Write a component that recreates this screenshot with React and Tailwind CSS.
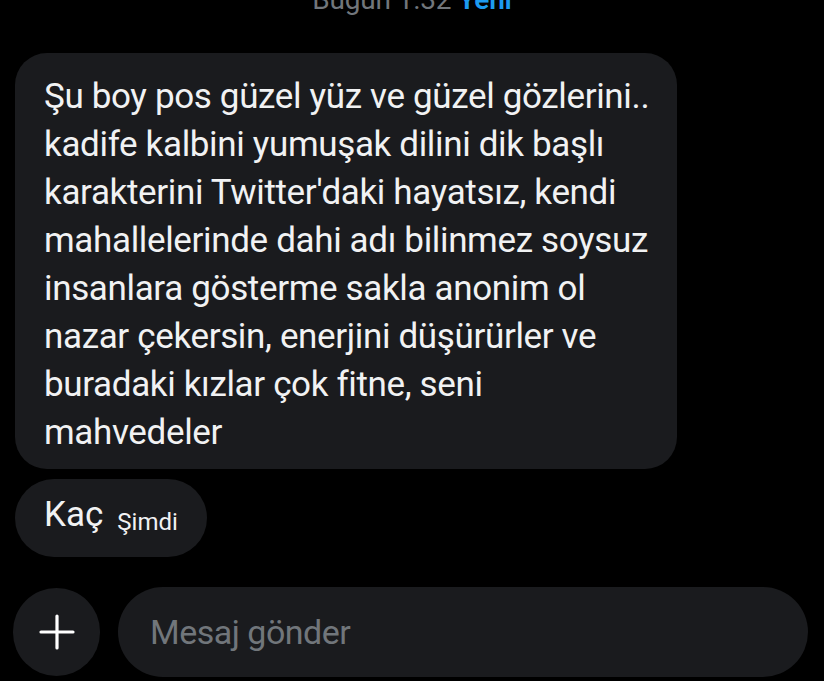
export default function App() {
  const lines = [
    "Şu boy pos güzel yüz ve güzel gözlerini..",
    "kadife kalbini yumuşak dilini dik başlı",
    "karakterini Twitter'daki hayatsız, kendi",
    "mahallelerinde dahi adı bilinmez soysuz",
    "insanlara gösterme sakla anonim ol",
    "nazar çekersin, enerjini düşürürler ve",
    "buradaki kızlar çok fitne, seni",
    "mahvedeler",
  ];

  return (
    <div
      className="w-[824px] h-[681px] bg-black text-white overflow-hidden flex flex-col"
      style={{ fontFamily: "Roboto, 'Liberation Sans', sans-serif" }}
    >
      {/* Date header */}
      <div className="h-[53px] flex justify-center">
        <p className="-mt-[15px] text-[28px] leading-[30px] tracking-[-0.2px]">
          <span className="text-[#71767b]">Bugün 1.32</span>{" "}
          <span className="text-[#1d9bf0] font-semibold">Yeni</span>
        </p>
      </div>

      {/* Message bubble */}
      <div className="pl-[15px]">
        <div className="w-[662px] h-[416px] bg-[#1a1b1e] rounded-[32px] pl-[29px] pt-[20px]">
          {lines.map((l) => (
            <p key={l} className="text-[35px] leading-[48px] tracking-[-0.35px] text-[#f1f2f3] whitespace-nowrap">
              {l}
            </p>
          ))}
        </div>
      </div>

      {/* Short bubble */}
      <div className="pl-[15px] mt-[10px]">
        <div className="inline-flex items-baseline gap-[14px] h-[78px] w-[192px] bg-[#1a1b1e] rounded-full pl-[29px] pt-[16px]">
          <span className="text-[35px] leading-[40px] text-[#f1f2f3]">Kaç</span>
          <span className="text-[24px] text-[#f1f2f3] translate-y-[4px]">Şimdi</span>
        </div>
      </div>

      {/* Composer */}
      <div className="flex items-center gap-[18px] pl-[13px] pr-[16px] mt-[30px]">
        <button className="w-[87px] h-[88px] rounded-full bg-[#1a1b1e] flex items-center justify-center shrink-0">
          <svg width="36" height="36" viewBox="0 0 36 36" fill="none" stroke="white" strokeWidth="3.2" strokeLinecap="round">
            <path d="M18 2v32M2 18h32" />
          </svg>
        </button>
        <div className="flex-1 h-[90px] rounded-full bg-[#1a1b1e] flex items-center pl-[32px]">
          <span className="text-[34px] text-[#71767b] tracking-[-0.5px]">Mesaj gönder</span>
        </div>
      </div>
    </div>
  );
}
